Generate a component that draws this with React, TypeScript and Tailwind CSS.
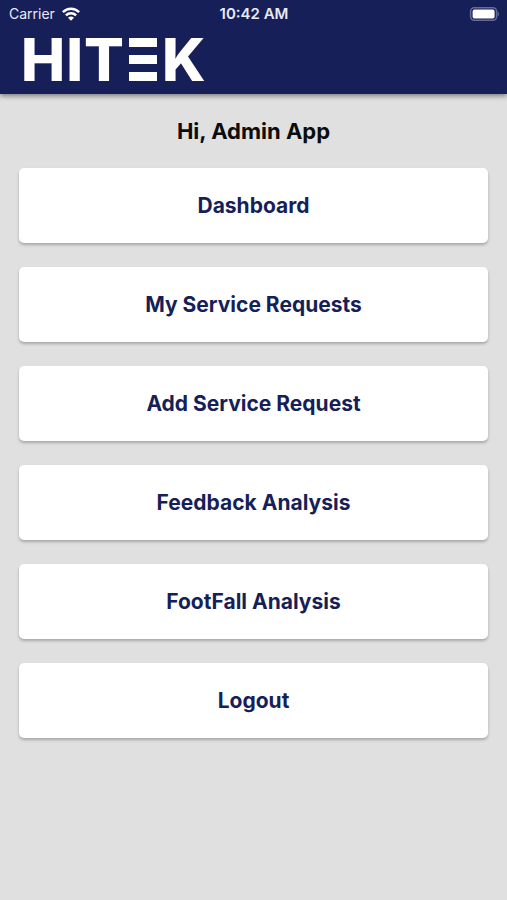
const menu = [
  "Dashboard",
  "My Service Requests",
  "Add Service Request",
  "Feedback Analysis",
  "FootFall Analysis",
  "Logout",
];

function StatusBar() {
  return (
    <div className="grid h-7 grid-cols-3 items-center pr-2 pl-[9px] text-sm leading-5 text-[#e8eaf6]">
      <div className="flex items-center gap-[7px]">
        <span>Carrier</span>
        <svg width="18" height="14" viewBox="0 0 18 14" fill="none" stroke="#fff" strokeWidth="2.5" aria-label="Wi-Fi">
          <path d="M.9 5.1C5.4 .5 12.6 .5 17.1 5.1" />
          <path d="M3.9 8.4C6.8 5.6 11.2 5.6 14.1 8.4" />
          <path d="M9 13.8 6 10.8C7.7 9.2 10.3 9.2 12 10.8Z" fill="#fff" stroke="none" />
        </svg>
      </div>
      <span className="text-center text-[15px] font-semibold">10:42 AM</span>
      <svg className="justify-self-end" width="30" height="14" viewBox="0 0 30 14" aria-label="Battery full">
        <rect x="1.6" y=".8" width="26" height="12.4" rx="3.6" fill="none" stroke="#666b98" strokeWidth="1.5" />
        <rect x="3.6" y="2.6" width="22" height="9" rx="1.8" fill="#fff" />
        <path d="M28.6 4.6c1.8.8 1.8 4 0 4.8z" fill="#666b98" />
      </svg>
    </div>
  );
}

function Logo() {
  return (
    <h1 className="flex h-16 items-center gap-px pl-[21px] text-[59px] leading-[64px] font-extrabold text-white">
      <span>H</span>
      <span>I</span>
      <span>T</span>
      <span className="relative w-9 text-transparent">
        E
        <svg className="absolute top-[10px] left-1" width="28" height="43" viewBox="0 0 28 43" fill="#fff" aria-hidden="true">
          <rect width="28" height="9" />
          <rect y="17" width="28" height="9" />
          <rect y="34" width="28" height="9" />
        </svg>
      </span>
      <span>K</span>
    </h1>
  );
}

export default function App() {
  return (
    <div className="min-h-screen bg-[#e0e0e0] font-['Inter',sans-serif]">
      <header className="h-[94px] bg-[#171f59] shadow-[0_2px_5px_rgba(0,0,0,0.45)]">
        <StatusBar />
        <Logo />
      </header>
      <main className="px-[19px] pt-[23px]">
        <h2 className="text-center text-[22px] leading-7 font-bold text-[#0c0c0c]">Hi, Admin App</h2>
        <nav className="mt-[23px] flex flex-col gap-6">
          {menu.map((item) => (
            <button
              key={item}
              type="button"
              className="h-[75px] rounded-[5px] bg-white text-[21px] leading-7 font-bold text-[#171f59] shadow-[0_2px_3px_rgba(0,0,0,0.25)]"
            >
              {item}
            </button>
          ))}
        </nav>
      </main>
    </div>
  );
}
